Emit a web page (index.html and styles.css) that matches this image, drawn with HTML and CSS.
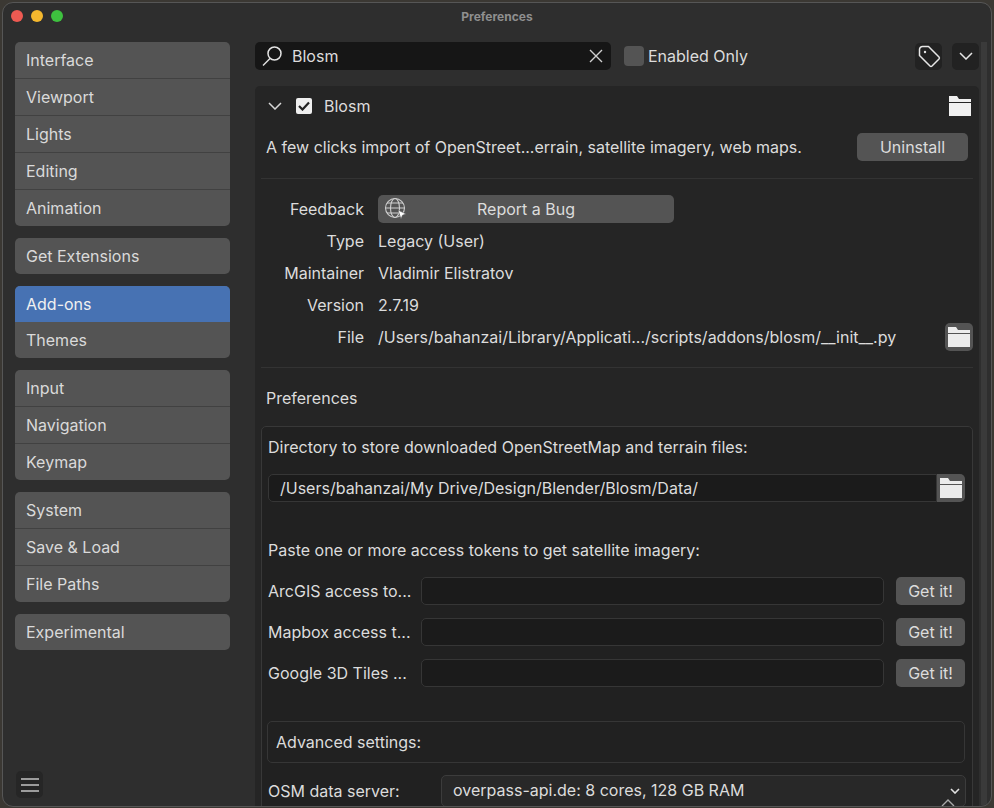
FILE: index.html
```html
<!DOCTYPE html>
<html lang="en">
<head>
    <meta charset="UTF-8">
    <title>Preferences</title>
    <link rel="stylesheet" href="styles.css">
</head>

<body>
    <svg class="defs" width="0" height="0">
        <symbol id="folder" viewBox="0 0 22 20">
            <path d="M0 0h8l2 3H22v3H0zM0 7h22v13H0z" fill="currentColor"/>
        </symbol>
    </svg>

    <div class="window">
        <div class="titlebar">
            <div class="lights">
                <span class="light red"></span>
                <span class="light yellow"></span>
                <span class="light green"></span>
            </div>
            <div class="title">Preferences</div>
        </div>

        <div class="content">
            <div class="sidebar">
                <ul class="group">
                    <li>Interface</li>
                    <li>Viewport</li>
                    <li>Lights</li>
                    <li>Editing</li>
                    <li>Animation</li>
                </ul>
                <ul class="group">
                    <li>Get Extensions</li>
                </ul>
                <ul class="group">
                    <li class="active">Add-ons</li>
                    <li>Themes</li>
                </ul>
                <ul class="group">
                    <li>Input</li>
                    <li>Navigation</li>
                    <li>Keymap</li>
                </ul>
                <ul class="group">
                    <li>System</li>
                    <li>Save &amp; Load</li>
                    <li>File Paths</li>
                </ul>
                <ul class="group">
                    <li>Experimental</li>
                </ul>
                <div class="menu-btn">
                    <svg width="18" height="14" viewBox="0 0 18 14"><path d="M0 1h18M0 7h18M0 13h18" stroke="#c4c4c4" stroke-width="1.4"/></svg>
                </div>
            </div>

            <div class="main">
                <div class="toolbar">
                    <div class="search">
                        <svg width="24" height="24" viewBox="0 0 24 24" fill="none" stroke="#e2e2e2" stroke-width="1.5"><circle cx="14.5" cy="9.5" r="6.5"/><path d="M10 14.5L3 21.5"/></svg>
                        <span class="search-text">Blosm</span>
                        <svg class="clear" width="14" height="14" viewBox="0 0 14 14" stroke="#d0d0d0" stroke-width="1.4"><path d="M1 1l12 12M13 1L1 13"/></svg>
                    </div>
                    <div class="enabled">
                        <span class="check-off"></span>
                        <span>Enabled Only</span>
                    </div>
                    <div class="tool-btn tag-btn">
                        <svg width="24" height="24" viewBox="0 0 24 24" fill="none" stroke="#e6e6e6" stroke-width="1.5" stroke-linejoin="round"><path d="M2.5 5.5a3 3 0 0 1 3-3h6L22 13a1.5 1.5 0 0 1 0 2l-7 7a1.5 1.5 0 0 1-2 0L2.5 11.5z"/><circle cx="8" cy="8" r="1.2" fill="#e6e6e6" stroke="none"/></svg>
                    </div>
                    <div class="tool-btn">
                        <svg width="14" height="8" viewBox="0 0 14 8" fill="none" stroke="#e6e6e6" stroke-width="1.5"><path d="M1 1l6 6 6-6"/></svg>
                    </div>
                </div>

                <div class="panel">
                    <div class="addon-head">
                        <svg class="caret" width="14" height="8" viewBox="0 0 14 8" fill="none" stroke="#d8d8d8" stroke-width="1.5"><path d="M1 1l6 6 6-6"/></svg>
                        <span class="check-on">
                            <svg width="12" height="10" viewBox="0 0 12 10" fill="none" stroke="#222" stroke-width="2.2"><path d="M1 5l3.5 3.5L11 1.5"/></svg>
                        </span>
                        <span class="addon-name">Blosm</span>
                        <svg class="head-folder" width="22" height="20"><use href="#folder"/></svg>
                    </div>
                    <div class="addon-desc">
                        <span>A few clicks import of OpenStreet...errain, satellite imagery, web maps.</span>
                        <div class="btn uninstall">Uninstall</div>
                    </div>
                    <div class="divider"></div>

                    <div class="info">
                        <div class="info-row">
                            <div class="info-label">Feedback</div>
                            <div class="btn bug">
                                <svg class="globe" width="24" height="24" viewBox="0 0 24 24" fill="none" stroke="#cfcfcf" stroke-width="1.1"><circle cx="11" cy="11" r="9.5"/><ellipse cx="11" cy="11" rx="4.5" ry="9.5"/><path d="M1.5 11h19M3 6h16M3 16h16"/><path d="M14 13l8 4-3.5 1.2L17 22z" fill="#fff" stroke="#555" stroke-width=".6"/></svg>
                                Report a Bug
                            </div>
                        </div>
                        <div class="info-row">
                            <div class="info-label">Type</div>
                            <div>Legacy (User)</div>
                        </div>
                        <div class="info-row">
                            <div class="info-label">Maintainer</div>
                            <div>Vladimir Elistratov</div>
                        </div>
                        <div class="info-row">
                            <div class="info-label">Version</div>
                            <div>2.7.19</div>
                        </div>
                        <div class="info-row">
                            <div class="info-label">File</div>
                            <div class="info-path">/Users/bahanzai/Library/Applicati.../scripts/addons/blosm/__init__.py</div>
                            <div class="btn folder-btn"><svg width="22" height="20"><use href="#folder"/></svg></div>
                        </div>
                    </div>
                    <div class="divider low"></div>

                    <div class="pref-title">Preferences</div>

                    <div class="box">
                        <div class="box-label">Directory to store downloaded OpenStreetMap and terrain files:</div>
                        <div class="dir-row">
                            <div class="field dir-field">/Users/bahanzai/My Drive/Design/Blender/Blosm/Data/</div>
                            <div class="btn dir-btn"><svg width="22" height="20"><use href="#folder"/></svg></div>
                        </div>
                        <div class="box-label tokens">Paste one or more access tokens to get satellite imagery:</div>
                        <div class="token-row">
                            <div class="token-label">ArcGIS access to...</div>
                            <div class="field token-field"></div>
                            <div class="btn get">Get it!</div>
                        </div>
                        <div class="token-row">
                            <div class="token-label">Mapbox access t...</div>
                            <div class="field token-field"></div>
                            <div class="btn get">Get it!</div>
                        </div>
                        <div class="token-row">
                            <div class="token-label">Google 3D Tiles ...</div>
                            <div class="field token-field"></div>
                            <div class="btn get">Get it!</div>
                        </div>
                        <div class="advanced">Advanced settings:</div>
                        <div class="osm-row">
                            <div class="osm-label">OSM data server:</div>
                            <div class="select">
                                overpass-api.de: 8 cores, 128 GB RAM
                                <svg width="10" height="6" viewBox="0 0 10 6" fill="none" stroke="#e0e0e0" stroke-width="1.6"><path d="M1 1l4 4 4-4"/></svg>
                            </div>
                        </div>
                    </div>
                </div>
            </div>

            <div class="scrollbar"></div>
        </div>

        <svg class="scroll-up" width="14" height="8" viewBox="0 0 14 8" fill="none" stroke="#aaa" stroke-width="1.4"><path d="M1 7l6-6 6 6"/></svg>
    </div>
</body>
</html>
```

FILE: styles.css
```css
* {
    box-sizing: border-box;
}
body, ul, li {
    margin: 0;
    padding: 0;
    list-style: none;
}
body {
    height: 808px;
    overflow: hidden;
    padding: 2px 2px 1px 2px;
    background: #3b3833;
    font-family: Inter, "Liberation Sans", sans-serif;
    font-size: 16px;
    color: #dcdcdc;
}
.defs {
    position: absolute;
}

.window {
    position: relative;
    height: 805px;
    border: 1px solid #565656;
    border-radius: 11px;
    overflow: hidden;
    background: #2e2e2e;
}

/* title bar */
.titlebar {
    position: relative;
    height: 39px;
}
.lights {
    display: flex;
    gap: 8px;
    padding: 7px 0 0 8px;
}
.light {
    width: 12px;
    height: 12px;
    border-radius: 50%;
}
.red {
    background: #ee5a52;
}
.yellow {
    background: #f5b82e;
}
.green {
    background: #3ec13f;
}
.title {
    position: absolute;
    top: 6px;
    left: 0;
    right: 0;
    text-align: center;
    font-size: 12px;
    font-weight: 700;
    color: #8f8f8f;
}

.content {
    display: flex;
    height: 763px;
}

/* left column */
.sidebar {
    position: relative;
    width: 252px;
    padding-left: 12px;
    flex-shrink: 0;
}
.group {
    width: 215px;
    margin-bottom: 12px;
    border-radius: 5px;
    overflow: hidden;
    background: #545454;
}
.group li {
    height: 37px;
    padding-left: 11px;
    line-height: 36px;
    border-bottom: 1px solid #414141;
    color: #dadada;
}
.group li:last-child {
    border-bottom: 0;
    height: 36px;
}
.group li.active {
    height: 36px;
    background: #4772b3;
    color: #f0f0f0;
    border-bottom: 0;
}
.menu-btn {
    position: absolute;
    left: 13px;
    bottom: 7px;
    width: 27px;
    height: 27px;
    display: flex;
    align-items: center;
    justify-content: center;
    border-radius: 5px;
    background: #262626;
}

/* right column */
.main {
    width: 724px;
    flex-shrink: 0;
}
.toolbar {
    display: flex;
    align-items: center;
    height: 28px;
    margin-bottom: 16px;
}
.search {
    display: flex;
    align-items: center;
    width: 356px;
    height: 28px;
    padding: 0 8px 0 5px;
    border-radius: 5px;
    background: #161616;
}
.search-text {
    margin-left: 8px;
}
.clear {
    margin-left: auto;
}
.enabled {
    display: flex;
    align-items: center;
    gap: 4px;
    margin-left: 13px;
}
.check-off {
    width: 20px;
    height: 20px;
    border-radius: 4px;
    background: #545454;
}
.tool-btn {
    display: flex;
    align-items: center;
    justify-content: center;
    width: 27px;
    height: 27px;
    margin-left: 10px;
    border-radius: 5px;
    background: #222;
}
.tag-btn {
    margin-left: auto;
}

.panel {
    height: 720px;
    padding: 0 6px;
    border-radius: 5px 5px 0 0;
    background: #252525;
}
.addon-head {
    display: flex;
    align-items: center;
    height: 40px;
    padding-left: 7px;
}
.check-on {
    display: flex;
    align-items: center;
    justify-content: center;
    width: 16px;
    height: 16px;
    margin-left: 14px;
    border-radius: 2px;
    background: #efefef;
}
.addon-name {
    margin-left: 12px;
}
.head-folder {
    margin-left: auto;
    margin-right: 2px;
    color: #f0f0f0;
}
.addon-desc {
    display: flex;
    align-items: center;
    justify-content: space-between;
    height: 28px;
    margin-top: 7px;
    padding: 0 5px;
}

.btn {
    display: flex;
    align-items: center;
    justify-content: center;
    border-radius: 5px;
    background: #545454;
    color: #dcdcdc;
}
.uninstall {
    width: 111px;
    height: 28px;
}
.divider {
    height: 1px;
    margin-top: 17px;
    background: #333;
}
.divider.low {
    margin-top: 14px;
}

.info {
    padding-top: 16px;
}
.info-row {
    display: flex;
    align-items: center;
    height: 32px;
}
.info-row:first-child {
    height: 28px;
    margin-bottom: 2px;
}
.info-label {
    width: 103px;
    margin-right: 14px;
    text-align: right;
}
.bug {
    position: relative;
    width: 296px;
    height: 28px;
}
.globe {
    position: absolute;
    left: 6px;
    top: 2px;
}
.info-path {
    flex: 1;
}
.folder-btn {
    width: 28px;
    height: 28px;
    margin-right: 0;
    color: #ececec;
}
.pref-title {
    height: 58px;
    padding: 20px 0 0 5px;
}

.box {
    height: 390px;
    padding: 8px 6px 0;
    border: 1px solid #383838;
    border-radius: 5px 5px 0 0;
    background: #212121;
}
.box-label {
    height: 24px;
    line-height: 24px;
}
.dir-row {
    display: flex;
    height: 28px;
    margin-top: 15px;
}
.field {
    border: 1px solid #363636;
    border-radius: 5px;
    background: #1b1b1b;
}
.dir-field {
    width: 669px;
    padding-left: 11px;
    line-height: 26px;
    border-radius: 5px 0 0 5px;
}
.dir-btn {
    width: 28px;
    border-radius: 0 5px 5px 0;
    color: #ececec;
}
.tokens {
    margin-top: 36px;
}
.token-row {
    display: flex;
    align-items: center;
    height: 28px;
    margin-top: 13px;
}
.tokens + .token-row {
    margin-top: 15px;
}
.token-label {
    width: 153px;
    white-space: nowrap;
    overflow: hidden;
}
.token-field {
    width: 463px;
    height: 28px;
}
.get {
    width: 69px;
    height: 28px;
    margin-left: 12px;
}
.advanced {
    width: 698px;
    height: 42px;
    margin-top: 34px;
    margin-left: -1px;
    padding-left: 8px;
    line-height: 41px;
    border: 1px solid #363636;
    border-radius: 5px;
}
.osm-row {
    display: flex;
    align-items: center;
    height: 30px;
    margin-top: 13px;
}
.osm-label {
    width: 173px;
}
.select {
    position: relative;
    width: 525px;
    height: 32px;
    padding-left: 11px;
    line-height: 28px;
    border: 1px solid #3c3c3c;
    border-radius: 5px;
    background: #282828;
}
.select svg {
    position: absolute;
    right: 5px;
    top: 12px;
}

.scrollbar {
    width: 6px;
    height: 100%;
    margin-left: 2px;
    background: #3a3a3a;
}
.scroll-up {
    position: absolute;
    right: 36px;
    bottom: -1px;
}
```
